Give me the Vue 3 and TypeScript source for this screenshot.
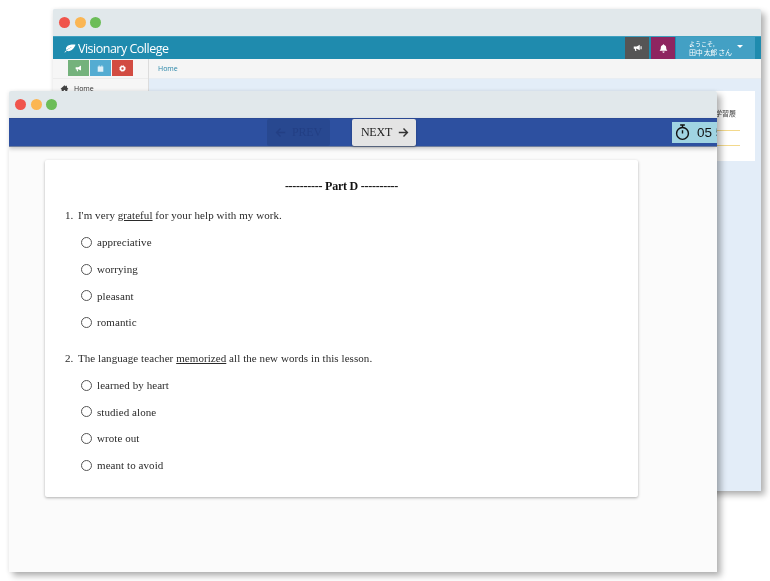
<script setup lang="ts">
interface Question {
  num: number
  before: string
  word: string
  after: string
  options: string[]
}
const questions: Question[] = [
  { num: 1, before: "I'm very ", word: 'grateful', after: ' for your help with my work.', options: ['appreciative', 'worrying', 'pleasant', 'romantic'] },
  { num: 2, before: 'The language teacher ', word: 'memorized', after: ' all the new words in this lesson.', options: ['learned by heart', 'studied alone', 'wrote out', 'meant to avoid'] },
]
</script>

<template>
  <div class="stage">
    <section class="win back">
      <div class="titlebar">
        <i class="dot red"></i><i class="dot amber"></i><i class="dot green"></i>
      </div>
      <header class="brandbar">
        <div class="brand">
          <svg class="leaf" viewBox="0 0 14 10" width="12" height="9"><path d="M13.5.5C9 .3 4.5.8 2.8 3.5 2 4.8 2.3 6 2.9 6.7 5 5 7 4 9.5 3.2 7 4.4 4.2 6 1.8 8l-1.3 1.3.7.5L3.300 7.700c1.500.8 4 .5 5.700-.9C11 5.200 12.500 3 13.500.5Z" fill="#fff"/></svg>
          <span>Visionary College</span>
        </div>
        <div class="tools">
          <div class="tool grey">
            <svg viewBox="0 0 12 10" width="9" height="8"><path d="M1 3h4l4-2.500v7.500L5 6H4l.6 3H3L2.300 6H1Z M10 2.500h1.500v4H10Z" fill="#fff"/></svg>
          </div>
          <div class="tool plum">
            <svg viewBox="0 0 10 10" width="9" height="9"><path d="M5 .4c.5 0 .8.300.8.800C7.300 1.600 8 2.800 8 4.300c0 1.700.5 2.400 1.300 3.200H.7C1.500 6.700 2 6 2 4.300c0-1.500.7-2.700 2.200-3.100 0-.5.300-.8.800-.8ZM3.800 8.200h2.400C6.200 9 5.700 9.600 5 9.600S3.800 9 3.800 8.200Z" fill="#fff"/></svg>
          </div>
          <div class="user">
            <div class="user-text">
              <span class="hello">ようこそ,</span>
              <span class="name">田中 太郎 さん</span>
            </div>
            <i class="caret"></i>
          </div>
        </div>
      </header>
      <div class="body">
        <aside class="side">
          <div class="side-btns">
            <span class="sbtn sgreen"><svg viewBox="0 0 12 10" width="8" height="7"><path d="M1 3h4l4-2.500v7.500L5 6H4l.6 3H3L2.300 6H1Z" fill="#fff"/></svg></span>
            <span class="sbtn sblue"><svg viewBox="0 0 10 10" width="7" height="7"><path d="M1 2h8v7.500H1Z M2.500.5h1v2h-1Z M6.500.5h1v2h-1Z" fill="#dff0f8"/></svg></span>
            <span class="sbtn sred"><svg viewBox="0 0 10 10" width="7" height="7"><circle cx="5" cy="5" r="2.800" fill="none" stroke="#fff" stroke-width="2.200"/><circle cx="5" cy="5" r="4.200" fill="none" stroke="#fff" stroke-width="1.200" stroke-dasharray="1.600 1.700"/></svg></span>
          </div>
          <div class="side-home">
            <svg viewBox="0 0 12 10" width="9" height="7"><path d="M6 .5.500 5.500l1 .8L2 6v3.500h3V7h2v2.500h3V6l.5.300 1-.8L9.500 3.500V1H8v1.200Z" fill="#444"/></svg>
            <span>Home</span>
          </div>
        </aside>
        <div class="main">
          <div class="crumb">Home</div>
          <div class="content">
            <div class="panel">
              <span class="panel-title">学習履</span>
              <i class="rule"></i>
              <i class="rule"></i>
            </div>
          </div>
        </div>
      </div>
    </section>

    <section class="win front">
      <div class="titlebar">
        <i class="dot red"></i><i class="dot amber"></i><i class="dot green"></i>
      </div>
      <nav class="testbar">
        <div class="nav-btns">
          <button class="navbtn prev" type="button">
            <svg viewBox="0 0 14 14" width="11" height="11"><path d="M13 7H2M7 2 2 7l5 5" fill="none" stroke="#233f84" stroke-width="1.800"/></svg>
            <span>PREV</span>
          </button>
          <button class="navbtn next" type="button">
            <span>NEXT</span>
            <svg viewBox="0 0 14 14" width="11" height="11"><path d="M1 7h11M7 2l5 5-5 5" fill="none" stroke="#333" stroke-width="1.800"/></svg>
          </button>
        </div>
        <div class="timer">
          <svg viewBox="0 0 16 18" width="15" height="17"><circle cx="8" cy="10" r="6.300" fill="none" stroke="#111" stroke-width="1.500"/><path d="M5.500 1h5M8 1v3M8 6.500V10" fill="none" stroke="#111" stroke-width="1.500"/></svg>
          <span>05 59</span>
        </div>
      </nav>
      <main class="sheet">
        <article class="card">
          <h2 class="part">---------- Part D ----------</h2>
          <div v-for="q in questions" :key="q.num" class="question">
            <p class="prompt">
              <span class="num">{{ q.num }}.</span>
              <span>{{ q.before }}<u>{{ q.word }}</u>{{ q.after }}</span>
            </p>
            <label v-for="o in q.options" :key="o" class="option">
              <i class="radio"></i>
              <span>{{ o }}</span>
            </label>
          </div>
        </article>
      </main>
    </section>
  </div>
</template>

<style>
html, body { margin: 0; background: #fff; }
</style>

<style scoped>
.stage {
  position: relative;
  width: 770px;
  height: 581px;
  overflow: hidden;
  background: #fff;
  filter: blur(.3px);
}
.win {
  position: absolute;
  width: 708px;
  display: flex;
  flex-direction: column;
  overflow: hidden;
  border-radius: 2px 2px 0 0;
  box-shadow: 4px 4px 6px rgba(0, 0, 0, .3), -1px 0 4px rgba(0, 0, 0, .06);
}
.back { left: 53px; top: 9px; height: 482px; background: #e3edf8; }
.front { left: 9px; top: 91px; height: 481px; background: #fbfbfb; }
.titlebar {
  height: 27px;
  flex: none;
  box-sizing: border-box;
  padding-left: 6px;
  display: flex;
  align-items: center;
  gap: 4.6px;
  background: #e1e8eb;
}
.dot { width: 11px; height: 11px; border-radius: 50%; flex: none; }
.red { background: #f0554c; }
.amber { background: #fbb653; }
.green { background: #6cbd58; }

.brandbar {
  height: 23px;
  flex: none;
  display: flex;
  justify-content: space-between;
  background: #1f8bae;
  padding-right: 6px;
  border-top: 1px solid #3fa0bf;
  box-sizing: border-box;
}
.brand {
  display: flex;
  align-items: center;
  gap: 2px;
  padding-left: 11px;
  color: #fff;
  font: 12.5px "Open Sans", sans-serif;
  letter-spacing: -.5px;
}
.tools { display: flex; }
.tool { width: 24px; display: flex; align-items: center; justify-content: center; }
.grey { background: #555; margin-right: 2px; }
.plum { background: #8e2560; margin-right: 1px; }
.user {
  width: 79px;
  box-sizing: border-box;
  background: #43a0c4;
  color: #fff;
  display: flex;
  align-items: center;
  padding-left: 13px;
  gap: 5px;
}
.user-text {
  display: flex;
  flex-direction: column;
  font-family: "Noto Sans CJK JP", sans-serif;
  line-height: 8px;
}
.hello { font-size: 6px; }
.name { font-size: 7px; white-space: nowrap; letter-spacing: -.3px; }
.caret {
  width: 0;
  height: 0;
  margin-top: -3px;
  border: 3px solid transparent;
  border-top-color: #fff;
  border-bottom: 0;
}
.body { flex: 1; display: flex; min-height: 0; }
.side {
  width: 96px;
  flex: none;
  background: #f6f6f6;
  border-right: 1px solid #dcdcdc;
  box-sizing: border-box;
}
.side-btns {
  height: 20px;
  box-sizing: border-box;
  border-bottom: 1px solid #ececec;
  display: flex;
  justify-content: center;
  gap: 1px;
  padding: 1px 0 2px 0;
}
.sbtn { width: 21px; display: flex; align-items: center; justify-content: center; }
.sgreen { background: #74b27c; }
.sblue { background: #54acd2; }
.sred { background: #d24c42; }
.side-home {
  display: flex;
  align-items: center;
  gap: 5px;
  padding: 5px 0 0 7px;
  font: 7px "Open Sans", sans-serif;
  color: #333;
}
.main { flex: 1; display: flex; flex-direction: column; min-width: 0; }
.crumb {
  height: 20px;
  flex: none;
  box-sizing: border-box;
  background: #f5f5f5;
  border-bottom: 1px solid #e8edf2;
  padding: 5px 0 0 9px;
  font: 7px "Open Sans", sans-serif;
  color: #2a86a8;
}
.content {
  flex: 1;
  display: flex;
  justify-content: flex-end;
  padding: 12px 6px 0 0;
}
.panel {
  width: 110px;
  height: 70px;
  background: #fff;
  box-sizing: border-box;
  padding: 17px 15px 0 0;
  display: flex;
  flex-direction: column;
  align-items: flex-end;
}
.panel-title {
  font: 7px "Noto Sans CJK JP", sans-serif;
  color: #444;
  line-height: 10px;
  padding-right: 4px;
  margin-bottom: 12px;
}
.rule { width: 100%; height: 1px; background: #f3d98c; margin-bottom: 14px; }

.testbar {
  height: 29px;
  flex: none;
  box-sizing: border-box;
  background: #2d50a0;
  border-top: 1px solid #2a4a96;
  border-bottom: 1px solid #6f7f9f;
  display: flex;
  align-items: center;
  position: relative;
  box-shadow: 0 2px 4px rgba(0, 0, 0, .2);
}
.nav-btns {
  display: flex;
  gap: 22px;
  padding-left: 258px;
}
.navbtn {
  height: 27px;
  margin: 0;
  padding: 0;
  border: 0;
  border-radius: 2px;
  display: flex;
  align-items: center;
  justify-content: center;
  gap: 6px;
  font: 12px "Liberation Serif", serif;
  letter-spacing: -.2px;
  color: #222;
}
.prev { width: 63px; background: #284890; color: #233f84; }
.next { width: 64px; background: #e4e4e4; box-shadow: 0 1px 2px rgba(0, 0, 0, .3); padding-left: 2px; }
.timer {
  position: absolute;
  left: 663px;
  top: 3px;
  width: 70px;
  height: 21px;
  background: #a0d4e2;
  display: flex;
  align-items: center;
  gap: 7px;
  padding-left: 3px;
  font: 13.5px "Liberation Sans", sans-serif;
  color: #111;
  white-space: nowrap;
}
.sheet { flex: 1; padding: 13px 0 0 36px; min-height: 0; }
.card {
  width: 593px;
  height: 337px;
  box-sizing: border-box;
  background: #fff;
  border-radius: 2px;
  box-shadow: 0 1px 3px rgba(0, 0, 0, .3);
  padding: 19px 20px 0 20px;
  font: 11px "Liberation Serif", serif;
  color: #2a2a2a;
  letter-spacing: .07px;
}
.part {
  margin: 0 0 15px;
  text-align: center;
  font-size: 12px;
  line-height: 14px;
  font-weight: bold;
  color: #111;
  letter-spacing: -.25px;
}
.question { margin-bottom: 15px; }
.prompt {
  margin: 0 0 7px;
  line-height: 14px;
  display: flex;
  gap: 4.5px;
}
.prompt u { text-underline-offset: 1px; }
.option {
  height: 26.7px;
  display: flex;
  align-items: center;
  gap: 5px;
  padding-left: 16px;
}
.radio {
  width: 9px;
  height: 9px;
  border: 1px solid #555;
  border-radius: 50%;
  flex: none;
}
</style>
